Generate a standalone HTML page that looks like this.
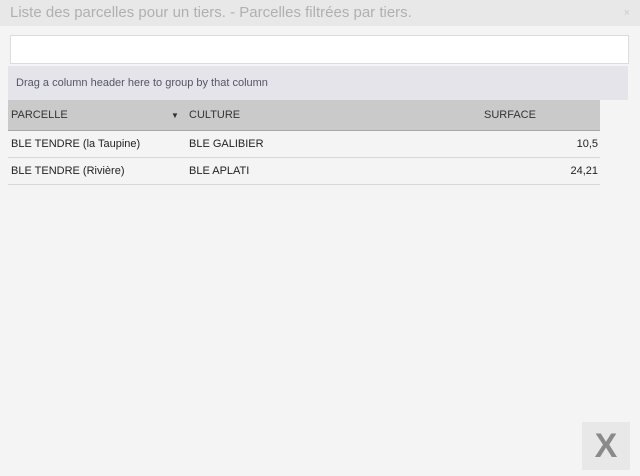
<!DOCTYPE html>
<html><head><style>
body{margin:0;width:640px;height:476px;background:#f4f4f4;font-family:"Liberation Sans",sans-serif;position:relative;overflow:hidden}
.title{position:absolute;left:0;top:0;width:640px;height:26px;background:#e8e8e8;color:#b0b0b0;font-size:15px;line-height:26px}
.title span{position:absolute;left:10px;top:0}
.close{position:absolute;right:10px;top:0;font-size:11px;color:#ccc}
.inp{position:absolute;left:10px;top:35px;width:617px;height:27px;background:#fff;border:1px solid #dcdcdc}
.grp{position:absolute;left:8px;top:66px;width:620px;height:34px;background:#e4e4ea;color:#556;font-size:11px;line-height:34px}
.grp span{margin-left:8px}
.hdr{position:absolute;left:8px;top:100px;width:592px;height:30px;background:#cacaca;border-bottom:1px solid #a8a8a8;font-size:11px;color:#333;line-height:31px}
.row{position:absolute;left:8px;width:592px;height:26px;border-bottom:1px solid #d8d8d8;font-size:11px;color:#222;line-height:26px}
.c1{position:absolute;left:3px}.c2{position:absolute;left:181px}.c3{position:absolute;left:476px}.r{position:absolute;right:2px}
.arrow{position:absolute;left:163px;font-size:8px}
.xb{position:absolute;left:582px;top:422px;width:48px;height:48px;background:#e8e8e8;color:#8a8a8a;font-weight:bold;font-size:34px;text-align:center;line-height:48px}
</style></head><body>
<div class="title"><span>Liste des parcelles pour un tiers. - Parcelles filtrées par tiers.</span><div class="close">×</div></div>
<div class="inp"></div>
<div class="grp"><span>Drag a column header here to group by that column</span></div>
<div class="hdr"><span class="c1">PARCELLE</span><span class="arrow">▼</span><span class="c2">CULTURE</span><span class="c3">SURFACE</span></div>
<div class="row" style="top:131px"><span class="c1">BLE TENDRE (la Taupine)</span><span class="c2">BLE GALIBIER</span><span class="r">10,5</span></div>
<div class="row" style="top:158px"><span class="c1">BLE TENDRE (Rivière)</span><span class="c2">BLE APLATI</span><span class="r">24,21</span></div>
<div class="xb">X</div>
</body></html>
